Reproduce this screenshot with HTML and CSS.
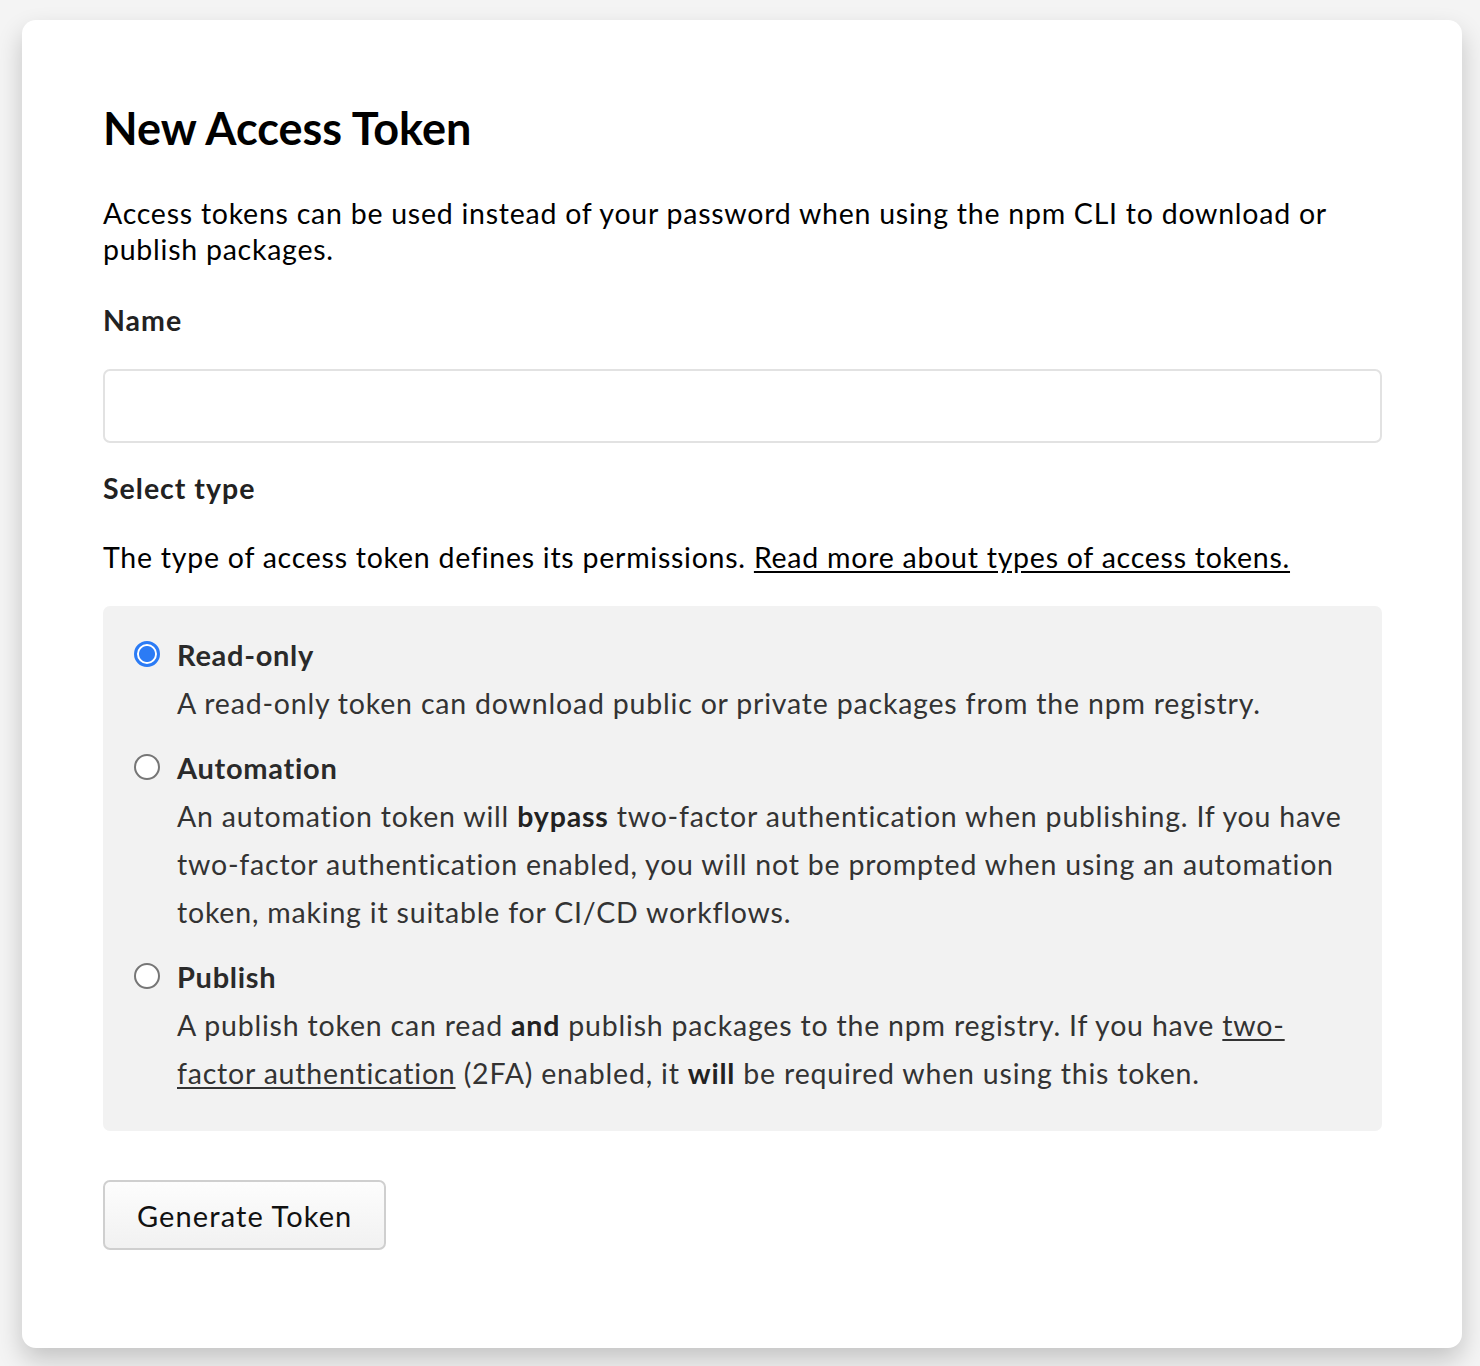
FILE: index.html
```html
<!DOCTYPE html>
<html lang="en">
<head>
<meta charset="utf-8">
<title>New Access Token</title>
<link rel="stylesheet" href="styles.css">
</head>
<body>
<main class="card">
  <h1 class="title">New Access Token</h1>
  <p class="intro">Access tokens can be used instead of your password when using the npm CLI to download or publish packages.</p>
  <label class="field-label" for="token-name">Name</label>
  <input class="text-input" id="token-name" type="text">
  <div class="field-label">Select type</div>
  <p class="type-help">The type of access token defines its permissions. <a href="#" class="link">Read more about types of access tokens.</a></p>
  <fieldset class="options">
    <label class="option">
      <input class="radio" type="radio" name="type" checked>
      <span class="option-body">
        <span class="option-title">Read-only</span>
        <span class="option-desc">A read-only token can download public or private packages from the npm registry.</span>
      </span>
    </label>
    <label class="option">
      <input class="radio" type="radio" name="type">
      <span class="option-body">
        <span class="option-title">Automation</span>
        <span class="option-desc">An automation token will <b>bypass</b> two-factor authentication when publishing. If you have two-factor authentication enabled, you will not be prompted when using an automation token, making it suitable for CI/CD workflows.</span>
      </span>
    </label>
    <label class="option">
      <input class="radio" type="radio" name="type">
      <span class="option-body">
        <span class="option-title">Publish</span>
        <span class="option-desc">A publish token can read <b>and</b> publish packages to the npm registry. If you have <a href="#" class="link">two-factor authentication</a> (2FA) enabled, it <b>will</b> be required when using this token.</span>
      </span>
    </label>
  </fieldset>
  <button class="btn" type="button">Generate Token</button>
</main>
</body>
</html>
```

FILE: styles.css
```css
* { box-sizing: border-box; }
html, body { margin: 0; }
body {
  background: #f4f4f4;
  padding: 20px 18px 18px 22px;
  font-family: "Lato", "Source Sans Pro", "Noto Sans", sans-serif;
  color: #000;
}
.card {
  background: #fff;
  border-radius: 14px;
  box-shadow: 0 12px 26px rgba(0, 0, 0, 0.2);
  padding: 80px 80px 98px 81px;
  min-height: 1328px;
  display: flex;
  flex-direction: column;
  align-items: flex-start;
}
.title {
  margin: 0;
  font-size: 45px;
  line-height: 56px;
  font-weight: 700;
  color: #000;
}
.intro {
  margin: 39px 0 0;
  font-size: 28.5px;
  line-height: 36px;
  letter-spacing: 0.75px;
}
.field-label {
  display: block;
  font-size: 28.5px;
  line-height: 36px;
  font-weight: 700;
  letter-spacing: 1px;
  color: #222;
  margin-top: 35px;
}
.text-input {
  margin-top: 31px;
  width: 100%;
  height: 74px;
  border: 2px solid #e2e2e2;
  border-radius: 7px;
  background: #fff;
  font: inherit;
  font-size: 27px;
  padding: 0 16px;
}
.text-input + .field-label { margin-top: 27px; }
.type-help {
  margin: 33px 0 0;
  font-size: 28.5px;
  line-height: 36px;
  letter-spacing: 0.75px;
}
.link { color: inherit; text-decoration: underline; text-underline-offset: 3px; }
.options {
  margin: 31px 0 0;
  width: 100%;
  border: 0;
  background: #f2f2f2;
  border-radius: 7px;
  padding: 25px 30px 34px 31px;
  display: flex;
  flex-direction: column;
  gap: 17px;
  min-inline-size: 0;
}
.option {
  display: flex;
  align-items: flex-start;
  gap: 17px;
  color: #333;
}
.radio {
  appearance: none;
  -webkit-appearance: none;
  margin: 10px 0 0;
  width: 26px;
  height: 26px;
  flex: none;
  border-radius: 50%;
  border: 2px solid #767676;
  background: #fff;
}
.radio:checked {
  border: 3px solid #2b7bf5;
  background: radial-gradient(circle, #2b7bf5 0 7.5px, #fff 8.5px);
}
.option-body { display: flex; flex-direction: column; }
.option-title {
  font-size: 29px;
  line-height: 48px;
  font-weight: 700;
  letter-spacing: 0.7px;
  color: #2a2a2a;
}
.option-desc {
  font-size: 28.5px;
  line-height: 48px;
  letter-spacing: 0.8px;
  color: #333;
}
.option-desc b { color: #222; }
.btn {
  margin-top: 49px;
  height: 70px;
  padding: 0 32px;
  border: 2px solid #cfcfcf;
  border-radius: 7px;
  background: linear-gradient(#fdfdfd, #f1f1f1);
  font-family: inherit;
  font-size: 29px;
  color: #111;
  letter-spacing: 1.1px;
}
```
